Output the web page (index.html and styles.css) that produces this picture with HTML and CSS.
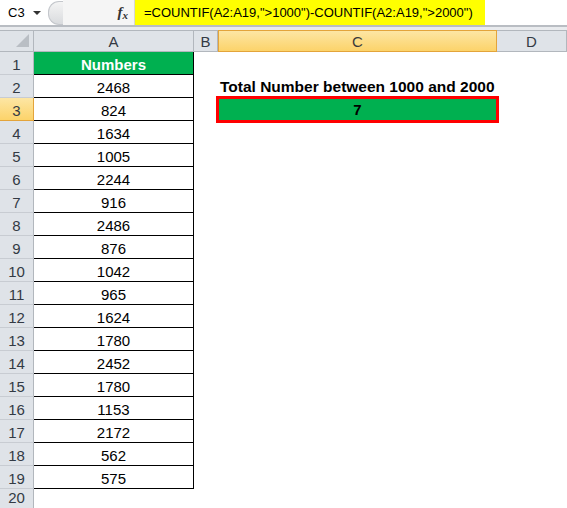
FILE: index.html
```html
<!DOCTYPE html>
<html>
<head>
<meta charset="utf-8">
<link rel="stylesheet" href="styles.css">
</head>
<body>
<div class="fbar">
  <div class="namebox"><span class="ref">C3</span><span class="caret"></span></div>
  <div class="knob"></div>
  <div class="fx"><i>f</i><i class="x">x</i></div>
  <div class="formula">=COUNTIF(A2:A19,"&gt;1000")-COUNTIF(A2:A19,"&gt;2000")</div>
</div>
<div class="gap"></div>
<div class="sheet">
  <div class="corner"><span class="tri"></span></div>
  <div class="ch">A</div>
  <div class="ch">B</div>
  <div class="ch sel">C</div>
  <div class="ch">D</div>

  <div class="rh">1</div><div class="a head">Numbers</div><div class="e"></div><div class="e"></div><div class="e"></div>
  <div class="rh">2</div><div class="a">2468</div><div class="e"></div><div class="e label">Total Number between 1000 and 2000</div><div class="e"></div>
  <div class="rh sel">3</div><div class="a">824</div><div class="e"></div><div class="e result">7</div><div class="e"></div>
  <div class="rh">4</div><div class="a">1634</div><div class="e"></div><div class="e"></div><div class="e"></div>
  <div class="rh">5</div><div class="a">1005</div><div class="e"></div><div class="e"></div><div class="e"></div>
  <div class="rh">6</div><div class="a">2244</div><div class="e"></div><div class="e"></div><div class="e"></div>
  <div class="rh">7</div><div class="a">916</div><div class="e"></div><div class="e"></div><div class="e"></div>
  <div class="rh">8</div><div class="a">2486</div><div class="e"></div><div class="e"></div><div class="e"></div>
  <div class="rh">9</div><div class="a">876</div><div class="e"></div><div class="e"></div><div class="e"></div>
  <div class="rh">10</div><div class="a">1042</div><div class="e"></div><div class="e"></div><div class="e"></div>
  <div class="rh">11</div><div class="a">965</div><div class="e"></div><div class="e"></div><div class="e"></div>
  <div class="rh">12</div><div class="a">1624</div><div class="e"></div><div class="e"></div><div class="e"></div>
  <div class="rh">13</div><div class="a">1780</div><div class="e"></div><div class="e"></div><div class="e"></div>
  <div class="rh">14</div><div class="a">2452</div><div class="e"></div><div class="e"></div><div class="e"></div>
  <div class="rh">15</div><div class="a">1780</div><div class="e"></div><div class="e"></div><div class="e"></div>
  <div class="rh">16</div><div class="a">1153</div><div class="e"></div><div class="e"></div><div class="e"></div>
  <div class="rh">17</div><div class="a">2172</div><div class="e"></div><div class="e"></div><div class="e"></div>
  <div class="rh">18</div><div class="a">562</div><div class="e"></div><div class="e"></div><div class="e"></div>
  <div class="rh">19</div><div class="a">575</div><div class="e"></div><div class="e"></div><div class="e"></div>
  <div class="rh last">20</div><div class="e"></div><div class="e"></div><div class="e"></div><div class="e"></div>
</div>
</body>
</html>
```
FILE: styles.css
```css
html, body {
  margin: 0;
  padding: 0;
  background: #ffffff;
  overflow: hidden;
}
body {
  width: 567px;
  height: 508px;
  font-family: "Liberation Sans", Arial, sans-serif;
  color: #000;
}
.fbar {
  height: 25px;
  display: flex;
  align-items: stretch;
  background: #ffffff;
  border-bottom: 2px solid #b9bdc3;
  box-sizing: content-box;
}
.namebox {
  width: 48px;
  display: flex;
  align-items: center;
  padding-left: 8px;
  box-sizing: border-box;
  font-size: 13px;
}
.namebox .ref {
  width: 25px;
}
.caret {
  width: 0;
  height: 0;
  border-left: 4px solid transparent;
  border-right: 4px solid transparent;
  border-top: 4px solid #333;
}
.knob {
  width: 14px;
  height: 22px;
  margin-top: 1px;
  border-radius: 11px 0 0 11px;
  border: 1px solid #c4c7cc;
  border-right: none;
  background: linear-gradient(#f4f4f4, #d9dbde);
}
.fx {
  width: 72px;
  display: flex;
  align-items: center;
  justify-content: flex-end;
  padding-right: 6px;
  box-sizing: border-box;
  font-family: "Liberation Serif", serif;
  font-size: 15px;
  color: #333;
  background: #f5f5f5;
  border-right: 1px solid #d6d6d6;
}
.fx i { font-weight: bold; }
.fx .x { font-size: 11px; margin-top: 4px; }
.formula {
  background: #ffff00;
  padding-left: 9px;
  width: 341px;
  display: flex;
  align-items: center;
  font-size: 13px;
  white-space: nowrap;
}
.gap {
  height: 3px;
  background: #e9ebee;
}
.sheet {
  display: grid;
  grid-template-columns: 34px 160px 24px 279px 70px;
  grid-template-rows: 22px repeat(19, 23px) 19px;
  font-size: 15px;
}
.corner {
  background: #dfe3e8;
  border-right: 1px solid #b2b7bd;
  border-bottom: 1px solid #b2b7bd;
  border-top: 1px solid #b2b7bd;
  box-sizing: border-box;
  position: relative;
}
.tri {
  position: absolute;
  right: 4px;
  bottom: 4px;
  width: 0;
  height: 0;
  border-left: 13px solid transparent;
  border-bottom: 13px solid #b9bec4;
}
.ch {
  background: #dfe3e8;
  border-right: 1px solid #b2b7bd;
  border-bottom: 1px solid #b2b7bd;
  border-top: 1px solid #b2b7bd;
  box-sizing: border-box;
  display: flex;
  align-items: center;
  justify-content: center;
  color: #333a44;
  font-size: 15px;
}
.ch.sel {
  background: linear-gradient(#fde6a4, #fcd36a);
  border: 1px solid #e3a43b;
  color: #3a3a3a;
}
.rh {
  background: #dfe3e8;
  border-right: 1px solid #b2b7bd;
  border-bottom: 1px solid #c8ccd2;
  box-sizing: border-box;
  display: flex;
  align-items: flex-end;
  justify-content: center;
  padding-bottom: 1px;
  color: #333a44;
  font-size: 15px;
}
.rh.last {
  border-bottom: none;
  padding-bottom: 0;
  align-items: flex-start;
  line-height: 18px;
}
.rh.sel {
  background: linear-gradient(#fde6a4, #fcd36a);
  border-right: 1px solid #e3a43b;
  border-bottom: 1px solid #e3a43b;
}
.a {
  border-right: 1px solid #000;
  border-bottom: 1px solid #000;
  box-sizing: border-box;
  display: flex;
  align-items: flex-end;
  justify-content: center;
  padding-bottom: 1px;
}
.a.head {
  background: #00b050;
  color: #ffffff;
  font-weight: bold;
}
.e {
  box-sizing: border-box;
}
.label {
  font-weight: bold;
  font-size: 15.5px;
  white-space: nowrap;
  display: flex;
  align-items: flex-end;
  padding-left: 2px;
  padding-bottom: 2px;
}
.result {
  background: #00b050;
  outline: 3px solid #ff0000;
  outline-offset: -1px;
  border: 1px solid #e0607a;
  font-weight: bold;
  display: flex;
  align-items: center;
  justify-content: center;
  font-size: 15px;
}
```
